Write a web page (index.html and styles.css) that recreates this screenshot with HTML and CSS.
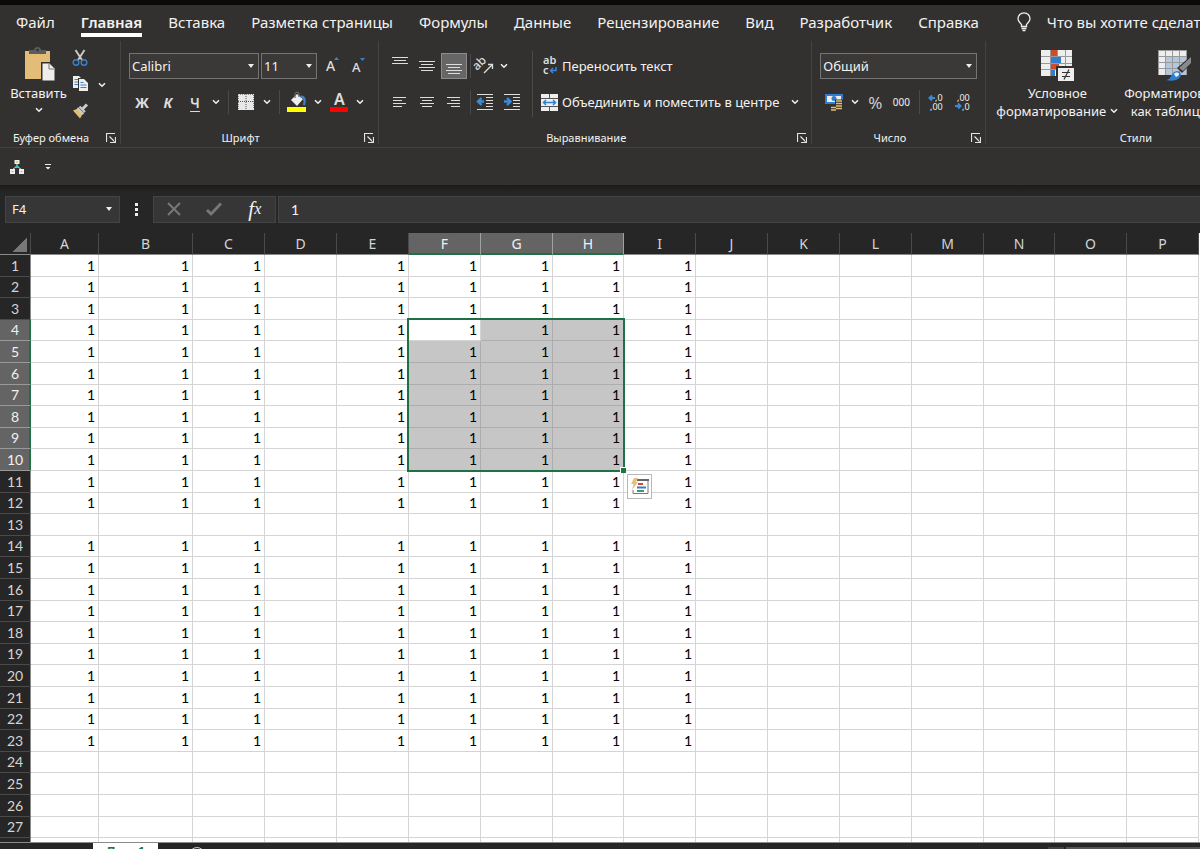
FILE: index.html
```html
<!DOCTYPE html>
<html lang="ru">
<head>
<meta charset="UTF-8">
<meta name="viewport" content="width=device-width, initial-scale=1.0">
<title>Excel</title>
<link rel="stylesheet" href="styles.css">
</head>
<body>
<svg class="symbols" aria-hidden="true">
  <symbol id="chevron" viewBox="0 0 8 6"><path d="M1 1.200l3 3 3-3" fill="none" stroke="#eee" stroke-width="1.600"/></symbol>
  <symbol id="launcher" viewBox="0 0 10 10"><path d="M.5 9V.5H9M3.500 3.500l5 5M9.500 4v5.500H4" fill="none" stroke="#e4e4e4" stroke-width="1.200"/></symbol>
</svg>
<div class="app">
  <nav class="tabs">
    <a href="#">Файл</a>
    <a href="#" class="active">Главная</a>
    <a href="#">Вставка</a>
    <a href="#">Разметка страницы</a>
    <a href="#">Формулы</a>
    <a href="#">Данные</a>
    <a href="#">Рецензирование</a>
    <a href="#">Вид</a>
    <a href="#">Разработчик</a>
    <a href="#">Справка</a>
    <a href="#" class="tell-me">
      <svg width="14" height="20" viewBox="0 0 14 20" fill="none" stroke="#eee" stroke-width="1.300"><path d="M4.500 14.500v-2C3 10.500 1 9.500 1 6.800a6 6 0 0 1 12 0c0 2.700-2 3.700-3.500 5.700v2zM4.500 16.500h5M5.500 18.500h3"/></svg>
      Что вы хотите сделать?
    </a>
  </nav>

  <div class="ribbon">
    <section class="group">
      <div class="group-body clipboard">
        <button class="big-btn paste">
          <svg width="32" height="35" viewBox="0 0 32 35"><path d="M2 4h25v28H2z" fill="#e3bd78"/><path d="M6 7V3h5c0-4 7-4 7 0h5v4z" fill="#5c5c5c"/><circle cx="14.500" cy="3" r="1.300" fill="#333"/><path d="M18 15h9l6 6v14H18z" fill="#333130"/><path d="M19.500 16.500h7l5 5v12h-12z" fill="#eee"/><path d="M26 17v5h5" fill="none" stroke="#777"/></svg>
          <span>Вставить</span>
          <svg class="chev"><use href="#chevron"/></svg>
        </button>
        <div class="stack">
          <button class="icon-btn" title="Вырезать"><svg width="16" height="18" viewBox="0 0 16 18" fill="none"><path d="M3.500 0l6.500 10M12.500 0L6 10" stroke="#ccc" stroke-width="1.900"/><circle cx="4" cy="12.500" r="2.800" stroke="#3a82c8" stroke-width="1.400"/><circle cx="12" cy="12.500" r="2.800" stroke="#3a82c8" stroke-width="1.400"/></svg></button>
          <span class="split">
            <button class="icon-btn" title="Копировать"><svg width="17" height="18" viewBox="0 0 17 18"><path d="M0 0h6l3 3v9H0z" fill="#eee"/><path d="M1.500 3.500h4M1.500 6h4M1.500 8.500h4" stroke="#3a82c8"/><path d="M5 2h7l4 4v10H5z" fill="#333130"/><path d="M6 3h5l4 4v8H6z" fill="#eee"/><path d="M7.500 6.500h3M7.500 9h6M7.500 11.500h6" stroke="#3a82c8"/></svg></button>
            <button class="chev-btn"><svg class="chev"><use href="#chevron"/></svg></button>
          </span>
          <button class="icon-btn" title="Формат по образцу"><svg width="16" height="16" viewBox="0 0 16 16"><path d="M1 7.500l5-2 5 5-3 5z" fill="#e3bd78"/><path d="M5.500 5l6 6M7.500 3.500l5.500 5.500" stroke="#ccc" stroke-width="2"/><path d="M10 6.500l5-5" stroke="#ccc" stroke-width="3"/></svg></button>
        </div>
      </div>
      <footer><span>Буфер обмена</span><button class="launch"><svg width="10" height="10"><use href="#launcher"/></svg></button></footer>
    </section>

    <section class="group">
      <div class="group-body rows">
        <div class="row">
          <span class="dropdown font-name"><select aria-label="Шрифт"><option>Calibri</option></select></span>
          <span class="dropdown font-size"><select aria-label="Размер шрифта"><option>11</option></select></span>
          <button class="icon-btn"><svg width="16" height="18" viewBox="0 0 16 18"><text x="2" y="14" font-size="14" font-weight="500" fill="#ddd">A</text><path d="M10 3l2.500-3L15 3z" fill="#3a82c8"/></svg></button>
          <button class="icon-btn"><svg width="16" height="18" viewBox="0 0 16 18"><text x="2" y="15" font-size="13" font-weight="500" fill="#ddd">A</text><path d="M10 1h5l-2.500 3z" fill="#3a82c8"/></svg></button>
        </div>
        <div class="row">
          <button class="icon-btn letter bold">Ж</button>
          <button class="icon-btn letter italic">К</button>
          <span class="split"><button class="icon-btn letter underline">Ч</button><button class="chev-btn"><svg class="chev"><use href="#chevron"/></svg></button></span>
          <i class="sep"></i>
          <span class="split"><button class="icon-btn"><svg width="16" height="16" viewBox="0 0 16 16"><path d="M0 0h16v16H0z" fill="#e8e8e8"/><path d="M8 0v15M0 7.500h16" stroke="#555" stroke-dasharray="1 1"/><path d="M.5 15V.5h15V15" fill="none" stroke="#888" stroke-dasharray="1 1"/></svg></button><button class="chev-btn"><svg class="chev"><use href="#chevron"/></svg></button></span>
          <i class="sep"></i>
          <span class="split"><button class="icon-btn"><svg width="20" height="20" viewBox="0 0 20 20"><path d="M0 15h19v5H0z" fill="#ff0"/><path d="M4 8l6-6 6 5-6 7z" fill="#eee"/><path d="M8 6V2.500c0-3 4-3 4 0V5" fill="none" stroke="#666" stroke-width="1.200"/><path d="M13.500 5c4-1 5 3 3.500 8" fill="none" stroke="#3a82c8" stroke-width="2.400"/></svg></button><button class="chev-btn"><svg class="chev"><use href="#chevron"/></svg></button></span>
          <span class="split"><button class="icon-btn"><svg width="20" height="20" viewBox="0 0 20 20"><path d="M1 15h18v5H1z" fill="#f00"/><text x="5" y="13" font-size="16" font-weight="600" fill="#ddd">A</text></svg></button><button class="chev-btn"><svg class="chev"><use href="#chevron"/></svg></button></span>
        </div>
      </div>
      <footer><span>Шрифт</span><button class="launch"><svg width="10" height="10"><use href="#launcher"/></svg></button></footer>
    </section>

    <section class="group">
      <div class="group-body align">
        <div class="rows">
          <div class="row">
            <button class="icon-btn line-btn"><svg width="18" height="18" viewBox="0 0 18 18" stroke="#ddd"><path d="M1 .5h16M3 3.500h12M1 6.500h16"/></svg></button>
            <button class="icon-btn line-btn"><svg width="18" height="18" viewBox="0 0 18 18" stroke="#ddd"><path d="M1 4.500h16M3 7.500h12M1 10.500h16M3 13.500h12"/></svg></button>
            <button class="icon-btn line-btn pressed"><svg width="18" height="18" viewBox="0 0 18 18" stroke="#ddd"><path d="M1 7.500h16M3 10.500h12M1 13.500h16M3 16.500h12"/></svg></button>
            <i class="sep"></i>
            <span class="split"><button class="icon-btn"><svg width="18" height="18" viewBox="0 0 18 18"><text x="1" y="14" font-size="12" font-weight="500" fill="#ddd" transform="rotate(-45 1 14)">ab</text><path d="M8 16l8-8M12 7.500h4.500V12" fill="none" stroke="#ddd" stroke-width="1.300"/></svg></button><button class="chev-btn"><svg class="chev"><use href="#chevron"/></svg></button></span>
          </div>
          <div class="row">
            <button class="icon-btn line-btn"><svg width="18" height="18" viewBox="0 0 18 18" stroke="#ddd"><path d="M2 4.500h13M2 7.500h9M2 10.500h13M2 13.500h9"/></svg></button>
            <button class="icon-btn line-btn"><svg width="18" height="18" viewBox="0 0 18 18" stroke="#ddd"><path d="M2 4.500h14M4 7.500h10M2 10.500h14M4 13.500h10"/></svg></button>
            <button class="icon-btn line-btn"><svg width="18" height="18" viewBox="0 0 18 18" stroke="#ddd"><path d="M2 4.500h13M6 7.500h9M2 10.500h13M6 13.500h9"/></svg></button>
            <i class="sep"></i>
            <button class="icon-btn line-btn"><svg width="18" height="18" viewBox="0 0 18 18" stroke="#ddd"><path d="M0 1.500h16M9 4.500h7M9 7.500h7M9 10.500h7M9 13.500h7M0 16.500h16"/><path d="M7 8.500H2M4.500 5L1 8.500 4.500 12" fill="none" stroke="#3a8ad8" stroke-width="2.400"/></svg></button>
            <button class="icon-btn line-btn"><svg width="18" height="18" viewBox="0 0 18 18" stroke="#ddd"><path d="M0 1.500h16M9 4.500h7M9 7.500h7M9 10.500h7M9 13.500h7M0 16.500h16"/><path d="M0 8.500h6M3 5l3.500 3.500L3 12" fill="none" stroke="#3a8ad8" stroke-width="2.400"/></svg></button>
          </div>
        </div>
        <i class="sep tall"></i>
        <div class="rows">
          <button class="text-btn"><svg width="17" height="18" viewBox="0 0 17 18"><text x="2" y="7" font-size="11" font-weight="600" fill="#ddd">ab</text><text x="2" y="17" font-size="11" font-weight="600" fill="#ddd">c</text><path d="M15 10v3.500H9.500M12 11l-2.500 2.500L12 16" fill="none" stroke="#3a8ad8" stroke-width="1.400"/></svg>Переносить текст</button>
          <span class="split"><button class="text-btn"><svg width="17" height="17" viewBox="0 0 17 17"><path d="M0 0h17v17H0z" fill="#eee"/><path d="M0 4.500h17M0 12.500h17M8.500 0v4M8.500 13v4" stroke="#555"/><path d="M2.500 8.500h12M5 6L2.500 8.500 5 11M12 6l2.500 2.500L12 11" fill="none" stroke="#2f7fd0" stroke-width="1.500"/></svg>Объединить и поместить в центре</button><button class="chev-btn wide"><svg class="chev"><use href="#chevron"/></svg></button></span>
        </div>
      </div>
      <footer><span>Выравнивание</span><button class="launch"><svg width="10" height="10"><use href="#launcher"/></svg></button></footer>
    </section>

    <section class="group">
      <div class="group-body rows">
        <div class="row">
          <span class="dropdown number-format"><select aria-label="Числовой формат"><option>Общий</option></select></span>
        </div>
        <div class="row">
          <span class="split"><button class="icon-btn"><svg width="18" height="18" viewBox="0 0 18 18"><path d="M0 1h18v10H0z" fill="#2f7fd0"/><path d="M2 3h14v6H2z" fill="#eee"/><circle cx="9" cy="5.500" r="2.500" fill="#2f7fd0"/><path d="M10 6.500h8V18H5v-5h5z" fill="#333130"/><path d="M11 8h6M11 10.500h6M11 13h6M11 15.500h6M6 14.500h5M6 17h5" stroke="#e3bd78" stroke-width="1.700"/></svg></button><button class="chev-btn"><svg class="chev"><use href="#chevron"/></svg></button></span>
          <button class="icon-btn percent">%</button>
          <button class="icon-btn thousands">000</button>
          <i class="sep"></i>
          <button class="icon-btn line-btn"><svg width="18" height="18" viewBox="0 0 18 18"><text x="8" y="8" font-size="9" fill="#eee">,0</text><text x="3" y="17" font-size="9" fill="#eee">,00</text><path d="M8 5H3M5 2.500L2.500 5 5 7.500" fill="none" stroke="#3a8ad8" stroke-width="2"/></svg></button>
          <button class="icon-btn line-btn"><svg width="18" height="18" viewBox="0 0 18 18"><text x="3" y="8" font-size="9" fill="#eee">,00</text><text x="8" y="17" font-size="9" fill="#eee">,0</text><path d="M1 13h5M4 10.500L6.500 13 4 15.500" fill="none" stroke="#3a8ad8" stroke-width="2"/></svg></button>
        </div>
      </div>
      <footer><span>Число</span><button class="launch"><svg width="10" height="10"><use href="#launcher"/></svg></button></footer>
    </section>

    <section class="group styles">
      <div class="group-body">
        <button class="big-btn">
          <svg width="34" height="33" viewBox="0 0 34 33"><path d="M1 1h31v26H1z" fill="#eee"/><path d="M10 1h7v6h-7zM10 14h9v6h-9z" fill="#d14b28"/><path d="M10 8h11v6H10zM10 21h5v6h-5z" fill="#2f7fd0"/><path d="M1 7.500h31M1 14.500h31M1 20.500h31M10.500 1v26M17.500 1v6M25.500 1v26" stroke="#999"/><path d="M16 17h18v15H16z" fill="#333130"/><path d="M18 19h16v13H18z" fill="#eee"/><path d="M22 23.500h8M22 27.500h8M29 20.500l-5 10" stroke="#333" stroke-width="1.200"/></svg>
          <span>Условное</span>
          <span>форматирование <svg class="chev"><use href="#chevron"/></svg></span>
        </button>
        <button class="big-btn">
          <svg width="34" height="33" viewBox="0 0 34 33"><path d="M1 1h29v25H1z" fill="#eee"/><path d="M9 7h21v19H9z" fill="#b5c7dc"/><path d="M1 1.500h29M1 7.500h29M1 13.500h29M1 19.500h29M8.500 1v25M15.500 1v25M22.500 1v25M29.500 1v25M1.500 1v25" stroke="#999"/><path d="M34 7v8l-9 9-5-5z" fill="#333130"/><path d="M34 8v6l-8 8-4-3z" fill="#8a8a8a"/><path d="M9 31c6 0 5-9 11-9 5 0 5 6 1 8-3 2-8 2-12 1z" fill="#2f7fd0"/><path d="M17 25c1-2 5-2 5 0s-2 2-3 3z" fill="#eee"/></svg>
          <span>Форматировать</span>
          <span>как таблицу <svg class="chev"><use href="#chevron"/></svg></span>
        </button>
      </div>
      <footer><span>Стили</span></footer>
    </section>
  </div>

  <div class="quick-bar">
    <button class="icon-btn"><svg width="14" height="14" viewBox="0 0 14 14"><path d="M7 4v4M7 6l-5 4M7 6l5 4" stroke="#ddd"/><path d="M4.500 0h5v4h-5zM0 9h5v5H0zM9 9h5v5H9z" fill="#eee"/><path d="M6 1.500h2v1H6zM1.500 11h2v1h-2zM10.500 11h2v1h-2z" fill="#c9c400"/><path d="M5.500 6h3v2h-3z" fill="#29c8d8"/></svg></button>
    <button class="icon-btn"><svg width="6" height="6" viewBox="0 0 6 6"><path d="M0 .5h6" stroke="#eee"/><path d="M.5 3h5L3 5.500z" fill="#eee"/></svg></button>
  </div>

  <div class="formula-bar">
    <span class="dropdown name-box"><select aria-label="Имя"><option>F4</option></select></span>
    <span class="dots"></span>
    <div class="formula-tools">
      <button><svg width="14" height="14" viewBox="0 0 14 14"><path d="M1 1l12 12M13 1L1 13" stroke="#777" stroke-width="2"/></svg></button>
      <button><svg width="16" height="14" viewBox="0 0 16 14"><path d="M1 8l4 4L15 1.500" fill="none" stroke="#777" stroke-width="2.800"/></svg></button>
      <button class="fx">f<sub>x</sub></button>
    </div>
    <input class="formula" type="text" value="1" aria-label="Строка формул">
  </div>

  <main class="sheet">
    <table id="grid"></table>
    <div class="selection" id="selection">
      <i class="handle"></i>
      <button class="quick-analysis"><svg width="18" height="17" viewBox="0 0 18 17"><path d="M5 1.500h12v14H2V12" fill="none" stroke="#777"/><path d="M6 1h12v2H6z" fill="#666"/><path d="M3 0h4L5 4h2l-6 8 1.500-6H0z" fill="#e9bf78"/><path d="M7 6h5" stroke="#d14b28" stroke-width="2"/><path d="M6 9.500h9" stroke="#2f7fd0" stroke-width="2"/><path d="M6 13h7" stroke="#3b9576" stroke-width="2"/></svg></button>
    </div>
  </main>

  <div class="sheet-tabs">
    <a href="#" class="sheet-tab">Лист1</a>
    <button class="add-sheet"><svg width="16" height="16" viewBox="0 0 16 16" fill="none" stroke="#ccc"><circle cx="8" cy="8" r="7.500"/><path d="M8 4v8M4 8h8"/></svg></button>
    <span class="scrollbar"><i class="scroll-btn"></i><i class="scroll-track"></i></span>
  </div>
</div>
<script>
  const grid = document.getElementById('grid');
  const selection = document.getElementById('selection');
  const rowCount = 28;
  const colCount = Math.min(26, Math.ceil((window.innerWidth - 193) / 72) + 2);
  const range = { top: 4, bottom: 10, left: 5, right: 7 };
  const emptyRows = [13];
  const emptyCols = [3]; // column D
  const lastRow = 23;
  const lastCol = 8;

  function inCols(c) {
    return c >= range.left && c <= range.right;
  }

  function inRows(r) {
    return r >= range.top && r <= range.bottom;
  }

  function addCell(row, tag, text, className) {
    const cell = document.createElement(tag);
    cell.textContent = text;
    if (className) cell.className = className;
    row.appendChild(cell);
    return cell;
  }

  const cols = document.createElement('colgroup');
  for (let c = -1; c < colCount; c++) {
    const col = document.createElement('col');
    col.className = c === -1 ? 'col-head' : c === 0 ? 'col-a' : c === 1 ? 'col-b' : 'col';
    cols.appendChild(col);
  }
  grid.appendChild(cols);

  const head = grid.createTHead().insertRow();
  addCell(head, 'th', '', 'corner');
  for (let c = 0; c < colCount; c++) {
    addCell(head, 'th', String.fromCharCode(65 + c), inCols(c) ? 'picked' : '');
  }

  const body = grid.createTBody();
  for (let r = 1; r <= rowCount; r++) {
    const row = body.insertRow();
    addCell(row, 'th', r, inRows(r) ? 'picked' : '');
    for (let c = 0; c < colCount; c++) {
      const filled = r <= lastRow && c <= lastCol && !emptyRows.includes(r) && !emptyCols.includes(c);
      const active = r === range.top && c === range.left;
      addCell(row, 'td', filled ? '1' : '', inRows(r) && inCols(c) && !active ? 'picked' : '');
    }
  }

  // frame around the selected range
  const first = body.rows[range.top - 1].cells[range.left + 1];
  const last = body.rows[range.bottom - 1].cells[range.right + 1];
  selection.style.left = `${first.offsetLeft - 2}px`;
  selection.style.top = `${first.offsetTop - 2}px`;
  selection.style.width = `${last.offsetLeft + last.offsetWidth - first.offsetLeft + 3}px`;
  selection.style.height = `${last.offsetTop + last.offsetHeight - first.offsetTop + 3}px`;
</script>
</body>
</html>
```

FILE: styles.css
```css
* {
  box-sizing: border-box;
}
body {
  margin: 0;
  height: 100vh;
  overflow: hidden;
  background-color: #262626;
  color: #f2f2f2;
  font-family: "Noto Sans", "Open Sans", sans-serif;
  font-size: 13px;
}
button, select, input {
  font: inherit;
  color: inherit;
  background: none;
  border: none;
  border-radius: 0;
  padding: 0;
  margin: 0;
}
a {
  color: inherit;
  text-decoration: none;
}
svg {
  display: block;
  flex-shrink: 0;
  overflow: visible;
}
.symbols {
  position: absolute;
  width: 0;
  height: 0;
}
.app {
  display: flex;
  flex-direction: column;
  height: calc(100vh + 20px);
  border-top: 5px solid #0a0a0a;
}

/* tabs */
.tabs {
  display: flex;
  gap: 26px;
  height: 36px;
  padding: 0 16px;
  overflow: hidden;
  background-color: #333130;
  font-size: 15px;
  line-height: 20px;
  white-space: nowrap;
}
.tabs a {
  height: 32px;
  padding-top: 7px;
}
.tabs .active {
  font-weight: 600;
  border-bottom: 4px solid #fff;
}
.tabs .tell-me {
  display: flex;
  gap: 16px;
  margin-left: 12px;
}

/* ribbon */
.ribbon {
  display: flex;
  height: 107px;
  overflow: hidden;
  background-color: #333130;
  border-bottom: 1px solid #444;
}
.group {
  display: flex;
  flex-direction: column;
  flex-shrink: 0;
  padding-top: 5px;
  border-right: 1px solid #454342;
  border-image: linear-gradient(#454342 96%, transparent 96%) 1;
}
.group-body {
  display: flex;
  flex: 1;
  padding: 0 7px 0 8px;
}
.group footer {
  display: flex;
  align-items: center;
  height: 19px;
  font-size: 11px;
}
.group footer span {
  flex: 1;
  text-align: center;
}
.launch {
  width: 18px;
  padding-left: 4px;
}
.rows {
  display: flex;
  flex-direction: column;
  gap: 10px;
  padding-top: 7px;
}
.row, .split {
  display: flex;
  align-items: center;
  height: 26px;
}
.icon-btn {
  display: flex;
  align-items: center;
  justify-content: center;
  width: 26px;
  height: 26px;
}
.line-btn {
  margin-right: 1px;
}
.split .icon-btn {
  width: 28px;
}
.align .split .icon-btn {
  width: 24px;
}
.chev-btn {
  display: flex;
  align-items: center;
  justify-content: center;
  width: 14px;
  height: 26px;
}
.chev-btn.wide {
  width: 32px;
}
.chev {
  width: 8px;
  height: 6px;
}
.sep {
  width: 1px;
  height: 24px;
  margin: 0 3px 0 5px;
  background-color: #4c4a49;
}
.line-btn + .sep {
  margin: 0 2px;
}
.sep.tall {
  height: 66px;
  margin: 5px 8px 0 5px;
}
.pressed {
  background-color: #666;
  border: 1px solid #8c8c8c;
}
.big-btn {
  display: flex;
  flex-direction: column;
  align-items: center;
  line-height: 18px;
  white-space: nowrap;
}
.big-btn > svg:first-child {
  margin-bottom: 2px;
}
.big-btn span {
  display: flex;
  align-items: center;
  gap: 4px;
}
.clipboard {
  padding: 0 0 0 10px;
}
.align {
  padding-right: 0;
}
.paste {
  width: 57px;
  padding-top: 1px;
}
.paste .chev {
  margin-top: 5px;
}
.stack {
  display: flex;
  flex-direction: column;
  width: 53px;
}
.styles {
  min-width: 317px;
  border: none;
}
.styles .group-body {
  gap: 6px;
  padding-left: 10px;
  padding-top: 3px;
}
.styles footer span {
  margin-right: 18px;
}
.dropdown {
  position: relative;
  display: block;
  height: 26px;
  background-color: #3b3938;
  border: 1px solid #767473;
}
.dropdown select {
  width: 100%;
  height: 100%;
  padding-left: 2px;
  appearance: none;
}
.dropdown::after {
  content: "";
  position: absolute;
  right: 4px;
  top: 10px;
  border: 3px solid transparent;
  border-top: 4px solid #eee;
  border-bottom: none;
  pointer-events: none;
}
.font-name {
  width: 130px;
  margin-right: 2px;
}
.font-size {
  width: 56px;
  margin-right: 2px;
}
.number-format {
  width: 157px;
  margin-right: 1px;
}
.letter {
  font-size: 14px;
  font-weight: bold;
  color: #ddd;
}
.italic {
  font-style: italic;
}
.underline {
  font-weight: 600;
  text-decoration: underline;
  text-underline-offset: 3px;
}
.percent {
  font-size: 17px;
  color: #ccc;
}
.thousands {
  font-size: 10px;
}
.text-btn {
  display: flex;
  align-items: center;
  gap: 4px;
  height: 26px;
  white-space: nowrap;
}

.quick-bar {
  display: flex;
  align-items: center;
  gap: 5px;
  height: 37px;
  padding-left: 4px;
  background-color: #333130;
}

/* formula bar */
.formula-bar {
  display: flex;
  align-items: center;
  height: 48px;
  padding-left: 5px;
  background: linear-gradient(#1c1c1c, #262626 8px);
}
.name-box, .formula-tools, .formula {
  height: 27px;
  background-color: #363636;
  border: 1px solid #444;
}
.name-box {
  width: 115px;
}
.name-box select {
  padding-left: 6px;
}
.name-box::after {
  right: 7px;
}
.dots {
  width: 3px;
  height: 13px;
  margin: 0 15px;
  background: repeating-linear-gradient(#eee 0 3px, transparent 3px 5px);
}
.formula-tools {
  display: flex;
  width: 123px;
  margin-right: 2px;
}
.formula-tools button {
  display: flex;
  flex: 1;
  align-items: center;
  justify-content: center;
}
.formula-tools .fx {
  font: italic 21px/22px "Liberation Serif", serif;
}
.fx sub {
  font-size: 16px;
}
.formula {
  flex: 1;
  min-width: 0;
  padding-left: 12px;
  border-right: none;
  font-family: Lato, sans-serif;
  font-size: 14px;
}

/* sheet */
.sheet {
  position: relative;
  flex: 1;
  min-height: 0;
  overflow: hidden;
  background-color: #fff;
}
table {
  width: 0;
  table-layout: fixed;
  border-spacing: 0;
}
.col-head {
  width: 31px;
}
.col-a {
  width: 68px;
}
.col-b {
  width: 94px;
}
.col {
  width: 72px;
}
.col:nth-child(6n+3) {
  width: 71px;
}
th, td {
  height: 22px;
  padding: 0;
  line-height: 20px;
  overflow: hidden;
}
/* row height averages 21.6px */
tbody tr:nth-child(5n+2) > *,
tbody tr:nth-child(5n+4) > * {
  height: 21px;
}
th {
  background-color: #262626;
  color: #d4d4d4;
  font-size: 14px;
  font-weight: normal;
}
thead th {
  border-right: 1px solid #4a4a4a;
  border-bottom: 1px solid #8a8a8a;
}
tbody th {
  border-right: 1px solid #8a8a8a;
  border-bottom: 1px solid #4a4a4a;
  font-family: Lato, sans-serif;
}
th.picked {
  background-color: #646464;
  color: #f0f0f0;
}
thead .picked {
  border-right-color: #a0a0a0;
  border-bottom-color: #1e7145;
  box-shadow: inset 0 -1px #1e7145;
}
tbody th.picked {
  border-bottom-color: #999;
  border-right-color: #1e7145;
  box-shadow: inset -1px 0 #1e7145;
}
.corner {
  background: linear-gradient(135deg, transparent 50%, #777 50%) 13px 5px / 14px 14px no-repeat #262626;
}
td {
  padding-right: 3px;
  border-right: 1px solid #d4d4d4;
  border-bottom: 1px solid #d4d4d4;
  color: #000;
  font-family: Lato, sans-serif;
  font-size: 14px;
  text-align: right;
}
td.picked {
  background-color: #c6c6c6;
  border-color: #adadad;
}
.selection {
  position: absolute;
  border: 2px solid #1e7145;
}
.handle {
  position: absolute;
  right: -3px;
  bottom: -3px;
  width: 6px;
  height: 6px;
  background-color: #1e7145;
  border: 1px solid #fff;
  border-width: 1px 0 0 1px;
}
.quick-analysis {
  position: absolute;
  left: 100%;
  top: 100%;
  display: flex;
  align-items: center;
  justify-content: center;
  width: 25px;
  height: 25px;
  margin: 4px 0 0 4px;
  background-color: #fff;
  border: 1px solid #b8b8b8;
}

.sheet-tabs {
  display: flex;
  flex-shrink: 0;
  align-items: flex-start;
  height: 27px;
  padding-left: 93px;
  border-top: 1px solid #8a8a8a;
}
.sheet-tab {
  width: 65px;
  height: 26px;
  background-color: #fff;
  color: #1e7145;
  font-weight: bold;
  line-height: 16px;
  text-align: center;
}
.add-sheet {
  margin: 4px 0 0 31px;
}
.scrollbar {
  display: flex;
  gap: 2px;
  width: 152px;
  height: 18px;
  margin: 4px 0 0 auto;
}
.scroll-btn {
  width: 16px;
  background-color: #444;
}
.scroll-track {
  flex: 1;
  background-color: #555;
}
```
